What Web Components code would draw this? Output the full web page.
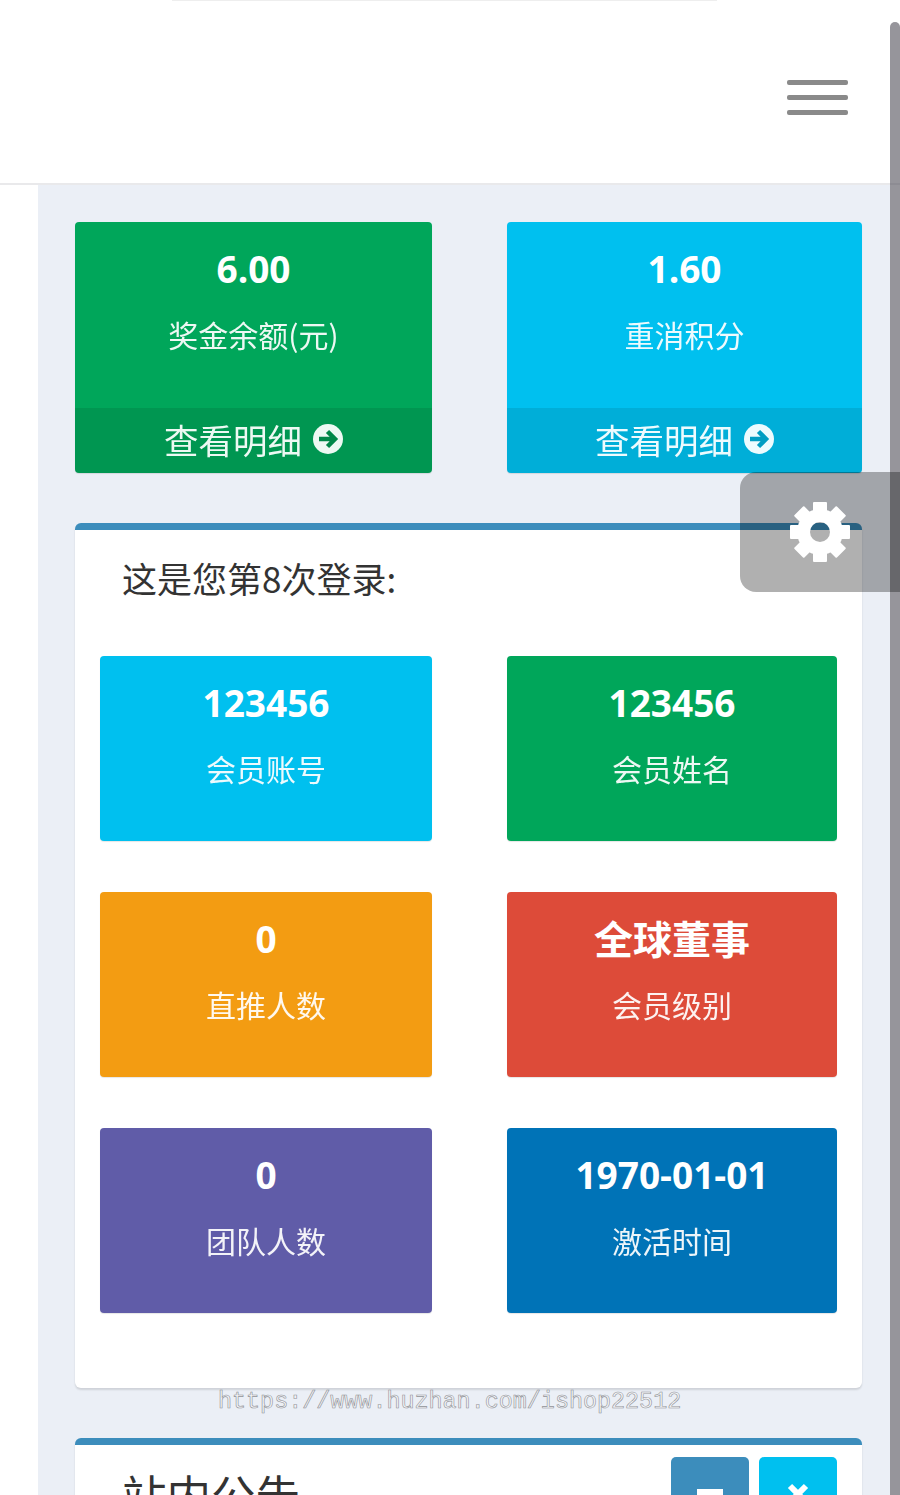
<!DOCTYPE html>
<html lang="zh">
<head>
<meta charset="utf-8">
<title>会员中心</title>
<style>
  html, body {
    height: 1495px;
    margin: 0;
    overflow: hidden;
  }

  body {
    background: #ffffff;
    color: #333333;
    font-family: 'Open Sans', 'Noto Sans CJK SC', sans-serif;
    position: relative;
  }
</style>
</head>
<body>
  <top-bar></top-bar>

  <page-content>
    <stat-row>
      <stat-box color="#00a65a" footer="查看明细">
        <span slot="value">6.00</span>
        奖金余额(元)
      </stat-box>
      <stat-box color="#00c0ef" footer="查看明细">
        <span slot="value">1.60</span>
        重消积分
      </stat-box>
    </stat-row>

    <info-panel heading="这是您第8次登录:">
      <stat-grid>
        <stat-box color="#00c0ef"><span slot="value">123456</span>会员账号</stat-box>
        <stat-box color="#00a65a"><span slot="value">123456</span>会员姓名</stat-box>
        <stat-box color="#f39c12"><span slot="value">0</span>直推人数</stat-box>
        <stat-box color="#dd4b39" style="--value-size: 39px"><span slot="value">全球董事</span>会员级别</stat-box>
        <stat-box color="#605ca8"><span slot="value">0</span>团队人数</stat-box>
        <stat-box color="#0073b7"><span slot="value">1970-01-01</span>激活时间</stat-box>
      </stat-grid>
    </info-panel>

    <info-panel heading="站内公告" tools></info-panel>
  </page-content>

  <fake-scrollbar></fake-scrollbar>
  <settings-tab></settings-tab>
  <water-mark>https://www.huzhan.com/ishop22512</water-mark>

<script>
  class TopBar extends HTMLElement {
    constructor() {
      super();
      this.attachShadow( {mode: 'open'} );
      this.shadowRoot.innerHTML = /* template */ `
        <style>
          :host {
            background: #ffffff;
            border-bottom: solid 2px #e9e9eb;
            box-sizing: border-box;
            display: flex;
            height: 185px;
            justify-content: flex-end;
            padding: 80px 52px 0 0;
            position: relative;
          }

          /* Faint edge left over at the very top */
          i {
            background: #eeeeee;
            height: 1px;
            left: 172px;
            position: absolute;
            top: 0;
            width: 545px;
          }

          button {
            appearance: none;
            background: none;
            border: none;
            display: flex;
            flex-direction: column;
            gap: 10px;
            height: 35px;
            margin: 0;
            padding: 0;
            width: 61px;
          }

          span {
            background: #8a8a8a;
            border-radius: 2px;
            display: block;
            height: 5px;
          }
        </style>
        <i></i>
        <button type="button" aria-label="菜单"><span></span><span></span><span></span></button>
      `;
    }
  }

  class PageContent extends HTMLElement {
    constructor() {
      super();
      this.attachShadow( {mode: 'open'} );
      this.shadowRoot.innerHTML = /* template */ `
        <style>
          :host {
            background: #ebeff6;
            box-sizing: border-box;
            display: flex;
            flex-direction: column;
            gap: 50px;
            margin: 0 10px 0 38px;
            padding: 37px 28px 0 37px;
          }
        </style>
        <slot></slot>
      `;
    }
  }

  class StatRow extends HTMLElement {
    constructor() {
      super();
      this.attachShadow( {mode: 'open'} );
      this.shadowRoot.innerHTML = /* template */ `
        <style>
          :host {
            display: grid;
            gap: 75px;
            grid-template-columns: 357px 355px;
          }
        </style>
        <slot></slot>
      `;
    }
  }

  class StatGrid extends HTMLElement {
    constructor() {
      super();
      this.attachShadow( {mode: 'open'} );
      this.shadowRoot.innerHTML = /* template */ `
        <style>
          :host {
            display: grid;
            gap: 51px 75px;
            grid-template-columns: 332px 330px;
            padding: 0 25px 75px 25px;
          }
        </style>
        <slot></slot>
      `;
    }
  }

  class StatBox extends HTMLElement {
    constructor() {
      super();
      this.attachShadow( {mode: 'open'} );
      this.shadowRoot.innerHTML = /* template */ `
        <style>
          :host {
            border-radius: 4px;
            box-shadow: 0 1px 1px rgba( 0, 0, 0, 0.1 );
            color: #ffffff;
            display: flex;
            flex-direction: column;
            overflow: hidden;
            text-align: center;
          }

          .body {
            box-sizing: border-box;
            display: flex;
            flex-direction: column;
            gap: 25px;
            height: 185px;
            padding: 27px 0 0 0;
          }

          .value {
            font-family: 'Open Sans', 'Noto Sans CJK SC', sans-serif;
            font-size: var( --value-size, 37px );
            font-weight: 700;
            line-height: 40px;
          }

          .label {
            font-family: 'Noto Sans CJK SC', sans-serif;
            font-size: 30px;
            line-height: 40px;
            opacity: 0.93;
          }

          .footer {
            align-items: center;
            background: rgba( 0, 0, 0, 0.1 );
            box-sizing: border-box;
            display: flex;
            font-family: 'Noto Sans CJK SC', sans-serif;
            font-size: 34.500px;
            gap: 11px;
            height: 65px;
            justify-content: center;
            opacity: 0.93;
            padding: 0 0 3px 0;
          }

          .footer[hidden] {
            display: none;
          }

          svg {
            display: block;
            height: 30px;
            width: 30px;
          }
        </style>
        <div class="body">
          <div class="value"><slot name="value"></slot></div>
          <div class="label"><slot></slot></div>
        </div>
        <div class="footer" hidden>
          <span></span>
          <svg viewBox="0 0 30 30">
            <circle cx="15" cy="15" r="15" fill="#ffffff"/>
            <path class="arrow" fill="none" stroke-width="4.500" stroke-linejoin="miter" d="M6 15h15M14.500 7.500l7.500 7.500l-7.500 7.500"/>
          </svg>
        </div>
      `;
    }

    connectedCallback() {
      const color = this.getAttribute( 'color' );
      this.style.background = color;

      if( this.hasAttribute( 'footer' ) ) {
        const footer = this.shadowRoot.querySelector( '.footer' );
        footer.hidden = false;
        footer.querySelector( 'span' ).textContent = this.getAttribute( 'footer' );
        footer.querySelector( '.arrow' ).setAttribute( 'style', `stroke: color-mix( in srgb, ${color} 80%, black )` );
        // Body is a pixel taller when there is a footer
        this.shadowRoot.querySelector( '.body' ).style.height = '186px';
      }
    }
  }

  class InfoPanel extends HTMLElement {
    constructor() {
      super();
      this.attachShadow( {mode: 'open'} );
      this.shadowRoot.innerHTML = /* template */ `
        <style>
          :host {
            background: #ffffff;
            border-radius: 6px;
            border-top: solid 7px #3c8dbc;
            box-shadow: 0 2px 2px rgba( 0, 0, 0, 0.12 );
            display: block;
          }

          header {
            align-items: center;
            box-sizing: border-box;
            display: flex;
            height: 96px;
            justify-content: space-between;
            padding: 0 25px 0 47px;
          }

          h2 {
            color: #333333;
            font-family: 'Noto Sans CJK SC', sans-serif;
            font-size: 35px;
            font-weight: 400;
            line-height: 40px;
            margin: 0;
          }

          .gap {
            height: 30px;
          }

          :host( [tools] ) header {
            align-items: flex-start;
            height: 120px;
            padding-top: 12px;
          }

          :host( [tools] ) h2 {
            font-size: 44.500px;
            font-weight: 400;
            line-height: 60px;
            margin-top: 7px;
          }

          .tools {
            display: none;
            gap: 10px;
          }

          :host( [tools] ) .tools {
            display: flex;
          }

          button {
            align-items: flex-start;
            appearance: none;
            border: none;
            border-radius: 5px;
            display: flex;
            height: 80px;
            justify-content: center;
            margin: 0;
            width: 78px;
          }

          .minus {
            background: #3c8dbc;
            padding: 26px 0 0 0;
          }

          .close {
            background: #00c0ef;
            padding: 26px 0 0 0;
          }

          svg {
            display: block;
            height: 26px;
            width: 26px;
          }
        </style>
        <header>
          <h2></h2>
          <div class="tools">
            <button class="minus" type="button" aria-label="收起">
              <svg viewBox="0 0 26 26"><rect x="0" y="6" width="26" height="9" fill="#ffffff"/></svg>
            </button>
            <button class="close" type="button" aria-label="关闭">
              <svg viewBox="0 0 26 26"><path fill="none" stroke="#ffffff" stroke-width="6" d="M5 3l16 16M21 3l-16 16"/></svg>
            </button>
          </div>
        </header>
        <div class="gap"></div>
        <slot></slot>
      `;
    }

    connectedCallback() {
      this.shadowRoot.querySelector( 'h2' ).textContent = this.getAttribute( 'heading' );
    }
  }

  class FakeScrollbar extends HTMLElement {
    constructor() {
      super();
      this.attachShadow( {mode: 'open'} );
      this.shadowRoot.innerHTML = /* template */ `
        <style>
          :host {
            background: rgba( 80, 78, 88, 0.6 );
            border-radius: 5px 5px 0 0;
            bottom: 0;
            display: block;
            position: absolute;
            right: 0;
            top: 22px;
            width: 10px;
          }
        </style>
      `;
    }
  }

  class SettingsTab extends HTMLElement {
    constructor() {
      super();
      this.attachShadow( {mode: 'open'} );
      this.shadowRoot.innerHTML = /* template */ `
        <style>
          :host {
            align-items: center;
            background: rgba( 0, 0, 0, 0.31 );
            border-radius: 16px 0 0 16px;
            display: flex;
            height: 120px;
            justify-content: center;
            position: absolute;
            right: 0;
            top: 472px;
            width: 160px;
          }

          svg {
            display: block;
            height: 62px;
            width: 62px;
          }
        </style>
        <svg viewBox="0 0 62 62">
          <mask id="hole">
            <g fill="#ffffff">
              <circle cx="31" cy="31" r="23"/>
              <rect x="24" y="1" width="14" height="60" rx="1"/>
              <rect x="24" y="1" width="14" height="60" rx="1" transform="rotate(45 31 31)"/>
              <rect x="24" y="1" width="14" height="60" rx="1" transform="rotate(90 31 31)"/>
              <rect x="24" y="1" width="14" height="60" rx="1" transform="rotate(135 31 31)"/>
            </g>
            <circle cx="31" cy="31" r="10" fill="#000000"/>
          </mask>
          <rect width="62" height="62" fill="#ffffff" mask="url(#hole)"/>
        </svg>
      `;
    }
  }

  class WaterMark extends HTMLElement {
    constructor() {
      super();
      this.attachShadow( {mode: 'open'} );
      this.shadowRoot.innerHTML = /* template */ `
        <style>
          :host {
            color: #f4f5f8;
            display: block;
            font-family: 'Liberation Mono', monospace;
            font-size: 23.400px;
            left: 218px;
            line-height: 30px;
            position: absolute;
            top: 1387px;
            -webkit-text-stroke: 0.6px #8f9196;
            white-space: nowrap;
          }
        </style>
        <slot></slot>
      `;
    }
  }

  window.customElements.define( 'top-bar', TopBar );
  window.customElements.define( 'page-content', PageContent );
  window.customElements.define( 'stat-row', StatRow );
  window.customElements.define( 'stat-grid', StatGrid );
  window.customElements.define( 'stat-box', StatBox );
  window.customElements.define( 'info-panel', InfoPanel );
  window.customElements.define( 'fake-scrollbar', FakeScrollbar );
  window.customElements.define( 'settings-tab', SettingsTab );
  window.customElements.define( 'water-mark', WaterMark );
</script>
</body>
</html>
